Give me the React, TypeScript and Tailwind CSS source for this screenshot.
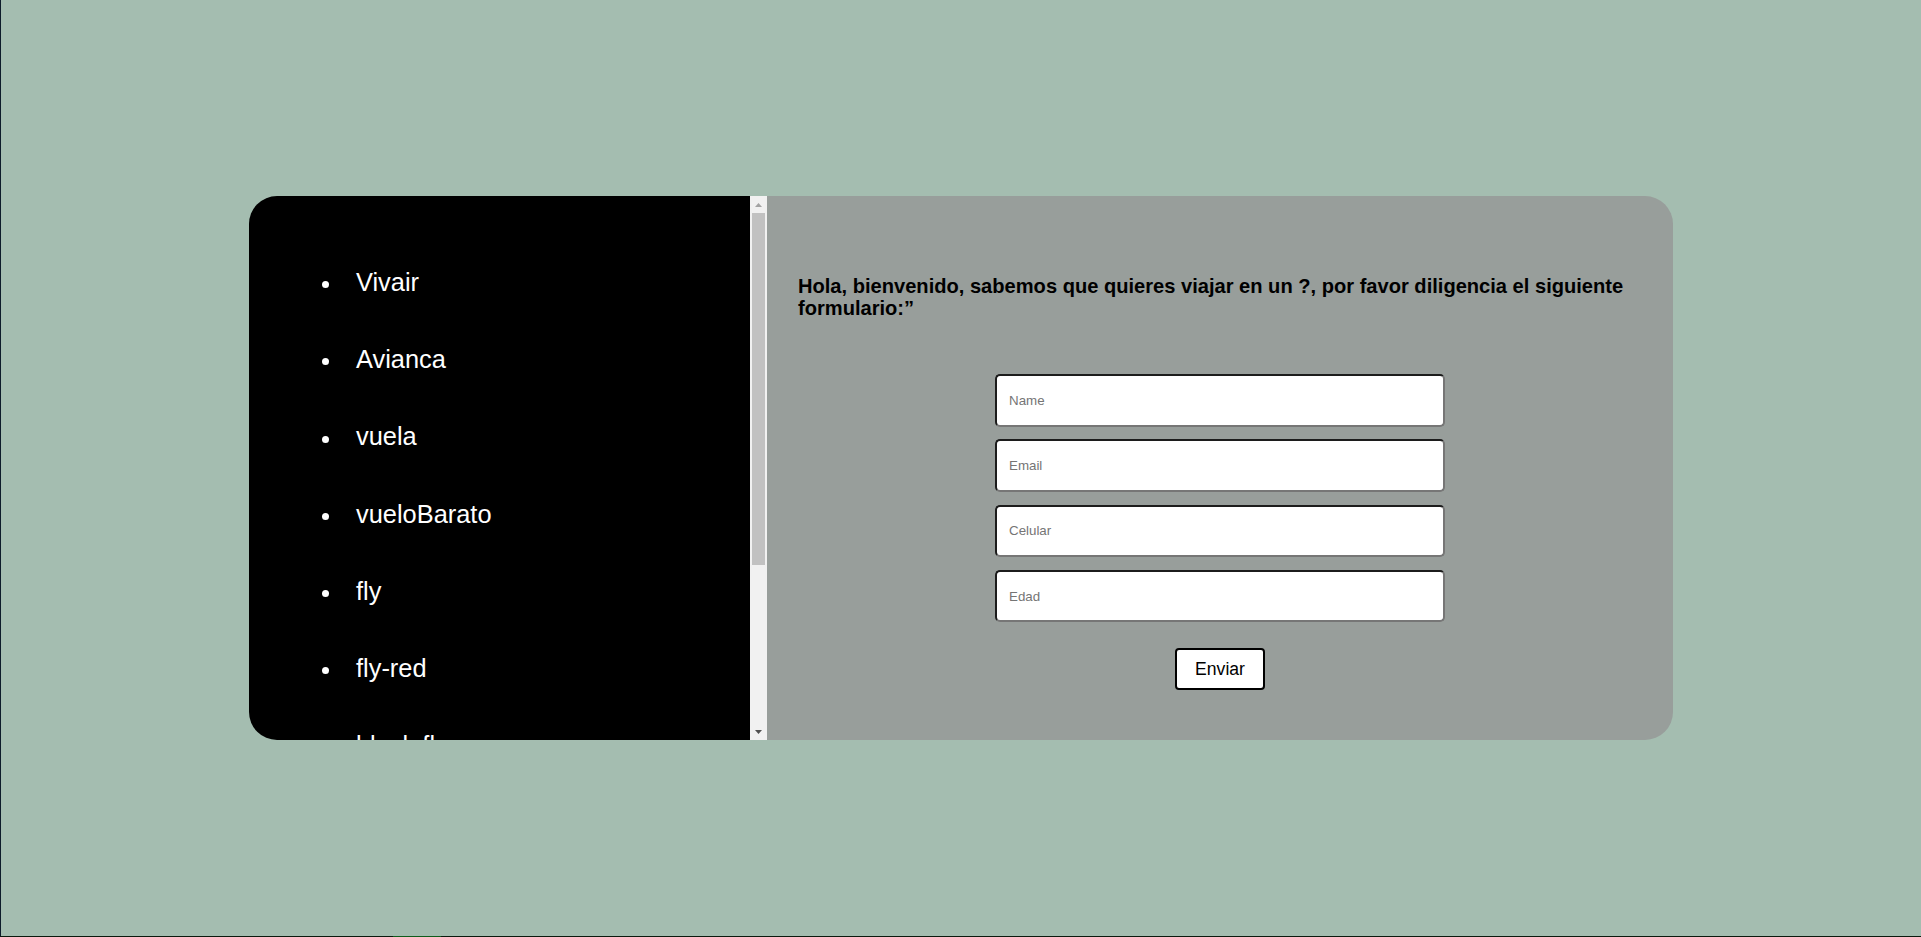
const airlines = [
  'Vivair',
  'Avianca',
  'vuela',
  'vueloBarato',
  'fly',
  'fly-red',
  'black fly',
  'aerolinea',
  'viajero',
];

const fields = ['Name', 'Email', 'Celular', 'Edad'];

function ScrollBar() {
  return (
    <div className="flex w-[17px] shrink-0 flex-col bg-[#f1f1f1]">
      <div className="flex h-[17px] items-center justify-center">
        <svg width="7" height="4" viewBox="0 0 7 4" className="fill-[#a3a3a3]">
          <path d="M3.5 0 L7 4 L0 4 Z" />
        </svg>
      </div>
      <div className="flex-1 px-[2px]">
        <div className="h-[352px] bg-[#c1c1c1]" />
      </div>
      <div className="flex h-[17px] items-center justify-center">
        <svg width="7" height="4" viewBox="0 0 7 4" className="fill-[#505050]">
          <path d="M0 0 L7 0 L3.5 4 Z" />
        </svg>
      </div>
    </div>
  );
}

export default function App() {
  return (
    <div className="flex h-[937px] w-full flex-col font-['Liberation_Sans',Arial,sans-serif]">
      <div className="flex min-h-0 flex-1">
        <div className="w-px bg-[#0d1b2a]" />
        <main className="flex flex-1 items-center justify-center bg-[#a4bdb0]">
          <div className="flex h-[544px] w-[1424px] overflow-hidden rounded-[28px]">
            {/* lista de aerolineas */}
            <aside className="flex w-[518px] bg-black">
              <div className="min-w-0 flex-1 overflow-hidden">
                <ul className="flex flex-col gap-[47.8px] pb-[71px] pl-[73px] pt-[72px]">
                  {airlines.map((name) => (
                    <li
                      key={name}
                      className="flex items-center text-[25.4px] leading-[29.4px] text-white"
                    >
                      <span className="h-[7px] w-[7px] shrink-0 translate-y-[2px] rounded-full bg-white" />
                      <span className="ml-[27px]">{name}</span>
                    </li>
                  ))}
                </ul>
              </div>
              <ScrollBar />
            </aside>

            {/* formulario */}
            <section className="flex flex-1 flex-col bg-[#989e9b] pt-[79px]">
              <h2 className="px-[31px] text-[20.1px] font-bold leading-[22px] text-black">
                Hola, bienvenido, sabemos que quieres viajar en un ?, por favor diligencia el
                siguiente formulario:”
              </h2>
              <form
                className="mt-[55px] flex flex-col items-center gap-[12.8px]"
                onSubmit={(e) => e.preventDefault()}
              >
                {fields.map((f) => (
                  <input
                    key={f}
                    type="text"
                    placeholder={f}
                    className="h-[52.5px] w-[450px] rounded-[5px] border-2 border-b-[#767676] border-l-[#1c1c1c] border-r-[#767676] border-t-[#1c1c1c] bg-white px-[12px] text-[13.33px] text-black outline-none placeholder:text-[#757575]"
                  />
                ))}
                <button
                  type="submit"
                  className="mt-[12.8px] h-[42px] w-[90px] rounded-[4px] border-2 border-black bg-white text-[17.6px] text-black"
                >
                  Enviar
                </button>
              </form>
            </section>
          </div>
        </main>
      </div>
      <div className="flex h-px">
        <div className="w-[393px] bg-[#0a1a0e]" />
        <div className="w-[48px] bg-[#0e5c1c]" />
        <div className="flex-1 bg-[#0a1a0e]" />
      </div>
    </div>
  );
}
